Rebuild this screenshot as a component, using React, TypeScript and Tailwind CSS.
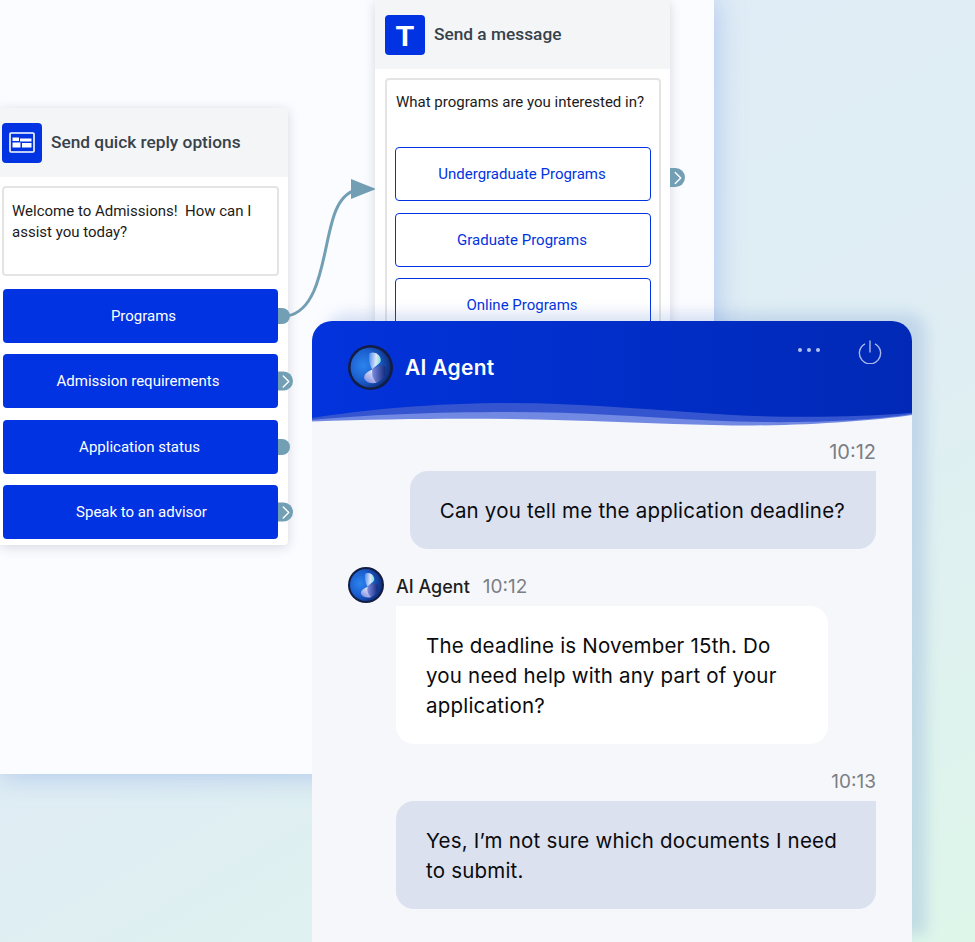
import { ChevronRight } from "lucide-react";

const ROBOTO = "font-['Roboto',sans-serif]";

function Orb({ id, size }: { id: string; size: number }) {
  return (
    <svg width={size} height={size} viewBox="0 0 44 44" className="shrink-0">
      <defs>
        <radialGradient id={`${id}-a`} cx="0.32" cy="0.45" r="0.72">
          <stop offset="0" stopColor="#2c84ee" />
          <stop offset="0.55" stopColor="#1a5ccc" />
          <stop offset="1" stopColor="#0b2670" />
        </radialGradient>
        <linearGradient id={`${id}-b`} x1="0" y1="0.3" x2="1" y2="0.4">
          <stop offset="0" stopColor="#4f8fee" />
          <stop offset="0.6" stopColor="#dfe6fa" />
          <stop offset="1" stopColor="#6fe6d2" />
        </linearGradient>
        <linearGradient id={`${id}-c`} x1="0.8" y1="0" x2="0.2" y2="1">
          <stop offset="0" stopColor="#f2f3fd" />
          <stop offset="1" stopColor="#7f8ce0" />
        </linearGradient>
        <linearGradient id={`${id}-d`} x1="0" y1="0.5" x2="1" y2="0.5">
          <stop offset="0" stopColor="#7f8de0" />
          <stop offset="1" stopColor="#12297f" />
        </linearGradient>
        <filter id={`${id}-f`} x="-10%" y="-10%" width="120%" height="120%">
          <feGaussianBlur stdDeviation="0.6" />
        </filter>
      </defs>
      <circle cx="22" cy="22" r="22" fill="#131c42" />
      <circle cx="22" cy="22" r="19.5" fill={`url(#${id}-a)`} />
      <g filter={`url(#${id}-f)`}>
        <path d="M24 24C29 20 33 19 36 21C38 28 35 34 28 37C23 33 23 28 24 24Z" fill={`url(#${id}-d)`} />
        <path d="M21 8C26 6 31 9 32 14C33 18 27 20 24 24C21 20 20 13 21 8Z" fill={`url(#${id}-b)`} />
        <path d="M24 24C19 26 15 29 16 33C18 37 23 38 28 37C24 33 23 28 24 24Z" fill={`url(#${id}-c)`} />
      </g>
    </svg>
  );
}

function Handle({ arrow, className }: { arrow?: boolean; className: string }) {
  return (
    <div
      className={`absolute flex items-center justify-center rounded-r-full bg-[#739fb5] ${
        arrow ? "right-[-15px] h-[19px] w-[15px]" : "right-[-12px] h-[16px] w-[12px]"
      } ${className}`}
    >
      {arrow && <ChevronRight size={22} strokeWidth={1.5} className="shrink-0 text-white" />}
    </div>
  );
}

const replies = [
  { label: "Programs", arrow: false, offset: "pl-[6px]" },
  { label: "Admission requirements", arrow: true, offset: "pr-[5px]" },
  { label: "Application status", arrow: false, offset: "pr-[2px]" },
  { label: "Speak to an advisor", arrow: true, offset: "pl-[2px]" },
];

function QuickReplyNode() {
  return (
    <div className={`absolute left-0 top-[108px] h-[437px] w-[288px] rounded-r-[4px] bg-white shadow-[0_2px_12px_rgba(60,70,100,0.2)] ${ROBOTO}`}>
      <div className="flex h-[69px] items-center gap-[9px] rounded-tr-[4px] bg-[#f4f5f7] pl-[2px]">
        <div className="flex h-10 w-10 items-center justify-center rounded-[4px] bg-[#0233e2]">
          <svg width="26" height="21" viewBox="0 0 26 21" fill="none">
            <rect x="1" y="1" width="24" height="19" rx="1" stroke="white" strokeWidth="1.6" />
            <rect x="3.5" y="5.5" width="6.5" height="3.5" fill="white" />
            <rect x="11" y="6.5" width="11.5" height="3" fill="white" />
            <rect x="3.5" y="10.5" width="8" height="5" fill="white" />
            <rect x="13" y="11" width="9.5" height="4.5" fill="white" />
          </svg>
        </div>
        <span className="pt-[1px] text-[17.3px] font-medium text-[#37424a]">Send quick reply options</span>
      </div>
      <div className="ml-[2px] mr-[9px] mt-[9px] h-[90px] rounded-[4px] border-2 border-[#e4e4e4] px-2 py-[13px] text-[15px] leading-[21px] text-[#1b1b1b]">
        Welcome to Admissions!&nbsp; How can I assist you today?
      </div>
      <div className="ml-[3px] mr-[10px] mt-[13px] flex flex-col gap-[11.9px]">
        {replies.map((r) => (
          <div key={r.label} className="relative">
            <div className={`flex h-[53.6px] items-center justify-center rounded-[4px] bg-[#0233e2] text-[15px] text-white ${r.offset}`}>
              {r.label}
            </div>
            <Handle arrow={r.arrow} className="top-1/2 -translate-y-1/2" />
          </div>
        ))}
      </div>
    </div>
  );
}

function MessageNode() {
  return (
    <div className={`absolute left-[375px] top-0 h-[340px] w-[295px] rounded-tr-[4px] bg-white shadow-[0_2px_12px_rgba(60,70,100,0.2)] ${ROBOTO}`}>
      <div className="flex h-[69px] items-center gap-[9px] bg-[#f4f5f7] pl-[10px]">
        <div className="flex h-10 w-10 items-center justify-center rounded-[4px] bg-[#0233e2] pt-[1px] font-['Liberation_Sans',sans-serif] text-[30px] font-bold text-white">
          T
        </div>
        <span className="pt-[1px] text-[17.3px] font-medium text-[#37424a]">Send a message</span>
      </div>
      <div className="ml-[10px] mr-[9px] mt-[9px] h-[300px] rounded-[4px] border-2 border-[#e4e4e4] px-[8px] pt-[12px]">
        <div className="pl-[1px] text-[15px] leading-[21px] text-[#1b1b1b]">What programs are you interested in?</div>
        <div className="mt-[34px] flex flex-col gap-[11.5px]">
          {["Undergraduate Programs", "Graduate Programs", "Online Programs"].map((p) => (
            <div
              key={p}
              className="flex h-[54px] items-center justify-center rounded-[4px] border border-[#0233e2] pr-[2px] pt-[1px] text-[15px] text-[#0233e2]"
            >
              {p}
            </div>
          ))}
        </div>
      </div>
      <Handle arrow className="top-[168px]" />
    </div>
  );
}

function Connector() {
  return (
    <svg width="100" height="150" viewBox="0 0 100 150" fill="none" className="absolute left-[285px] top-[175px]">
      <path d="M2 141C40 135 38 60 52 33C58 20 66 15 76 14" stroke="#739fb5" strokeWidth="3" />
      <path d="M66 4L91 14L66 24Z" fill="#739fb5" />
    </svg>
  );
}

function ChatHeader() {
  return (
    <div className="relative h-[105px] shrink-0 bg-gradient-to-r from-[#0233dc] to-[#0129b6]">
      <div className="flex h-[93px] items-center gap-[12px] pl-[36px]">
        <Orb id="head" size={45} />
        <span className="text-[21px] font-semibold tracking-[0.3px] text-white">AI Agent</span>
      </div>
      <div className="absolute left-[486px] top-[27px] flex gap-[5px]">
        <span className="h-[4px] w-[4px] rounded-full bg-[#b5c2ee]" />
        <span className="h-[4px] w-[4px] rounded-full bg-[#b5c2ee]" />
        <span className="h-[4px] w-[4px] rounded-full bg-[#b5c2ee]" />
      </div>
      <svg width="24" height="24" viewBox="0 0 24 24" fill="none" className="absolute left-[546px] top-[19px]">
        <path d="M7 3.8a10.6 10.6 0 1 0 10 0M12 0.5v12" stroke="#a9b8ea" strokeWidth="1.4" />
      </svg>
      <svg viewBox="0 0 600 26" width="600" height="26" preserveAspectRatio="none" className="absolute bottom-0 left-0">
        <path d="M0 18C50 10 120 3 198 3C270 3 340 10 420 15C480 18 550 17 600 12.7V26H0Z" fill="#3455cf" />
        <path d="M0 20C50 15 120 12 198 12C270 12 330 17 400 20.5C470 24 550 22 600 14V26H0Z" fill="#7189e2" />
        <path d="M0 21.6C70 19 130 18.5 198 19C270 20 340 24 420 25.5C490 26 560 21 600 15V26H0Z" fill="#f6f7fb" />
      </svg>
    </div>
  );
}

function ChatWindow() {
  return (
    <div className="absolute left-[312px] top-[321px] flex h-[621px] w-[600px] flex-col overflow-hidden rounded-t-[20px] bg-[#f6f7fb] font-['Inter',sans-serif] shadow-[14px_-8px_14px_rgba(90,130,205,0.22)]">
      <ChatHeader />
      <div className="flex flex-col px-[36px] text-[20.5px] leading-[30px] tracking-[0.2px] text-[#0a0b0d]">
        <div className="mt-[14px] text-right text-[20px] leading-[24px] tracking-normal text-[#7b7e85]">10:12</div>
        <div className="mt-[7px] self-end rounded-l-[18px] rounded-br-[18px] bg-[#dce1f0] pb-[23px] pl-[30px] pr-[31px] pt-[25px]">
          Can you tell me the application deadline?
        </div>
        <div className="mt-[18px] flex items-center gap-[12px]">
          <Orb id="msg" size={36} />
          <span className="pt-[3px] text-[18px] font-medium leading-[24px] tracking-normal text-[#1c1e22]">AI Agent</span>
          <span className="ml-[1px] pt-[3px] text-[19px] leading-[24px] tracking-normal text-[#7b7e85]">10:12</span>
        </div>
        <div className="ml-[48px] mt-[3px] w-[432px] rounded-[18px] rounded-tl-none bg-white px-[30px] pb-[23px] pt-[25px]">
          The deadline is November 15th. Do you need help with any part of your application?
        </div>
        <div className="mt-[27px] text-right text-[19px] leading-[22px] tracking-normal text-[#7b7e85]">10:13</div>
        <div className="ml-[48px] mt-[8px] rounded-l-[18px] rounded-br-[18px] bg-[#dce1f0] px-[30px] pb-[23px] pt-[25px]">
          Yes, I’m not sure which documents I need to submit.
        </div>
      </div>
    </div>
  );
}

export default function App() {
  return (
    <div className="relative h-[942px] w-[975px] overflow-hidden bg-[linear-gradient(150deg,#e0ebf8_0%,#dfeef3_60%,#def6ea_100%)]">
      {/* canvas */}
      <div className="absolute left-0 top-0 h-[774px] w-[714px] bg-[#fbfcff] shadow-[0_0_28px_rgba(90,130,225,0.4)]" />
      <Connector />
      <QuickReplyNode />
      <MessageNode />
      <ChatWindow />
    </div>
  );
}
